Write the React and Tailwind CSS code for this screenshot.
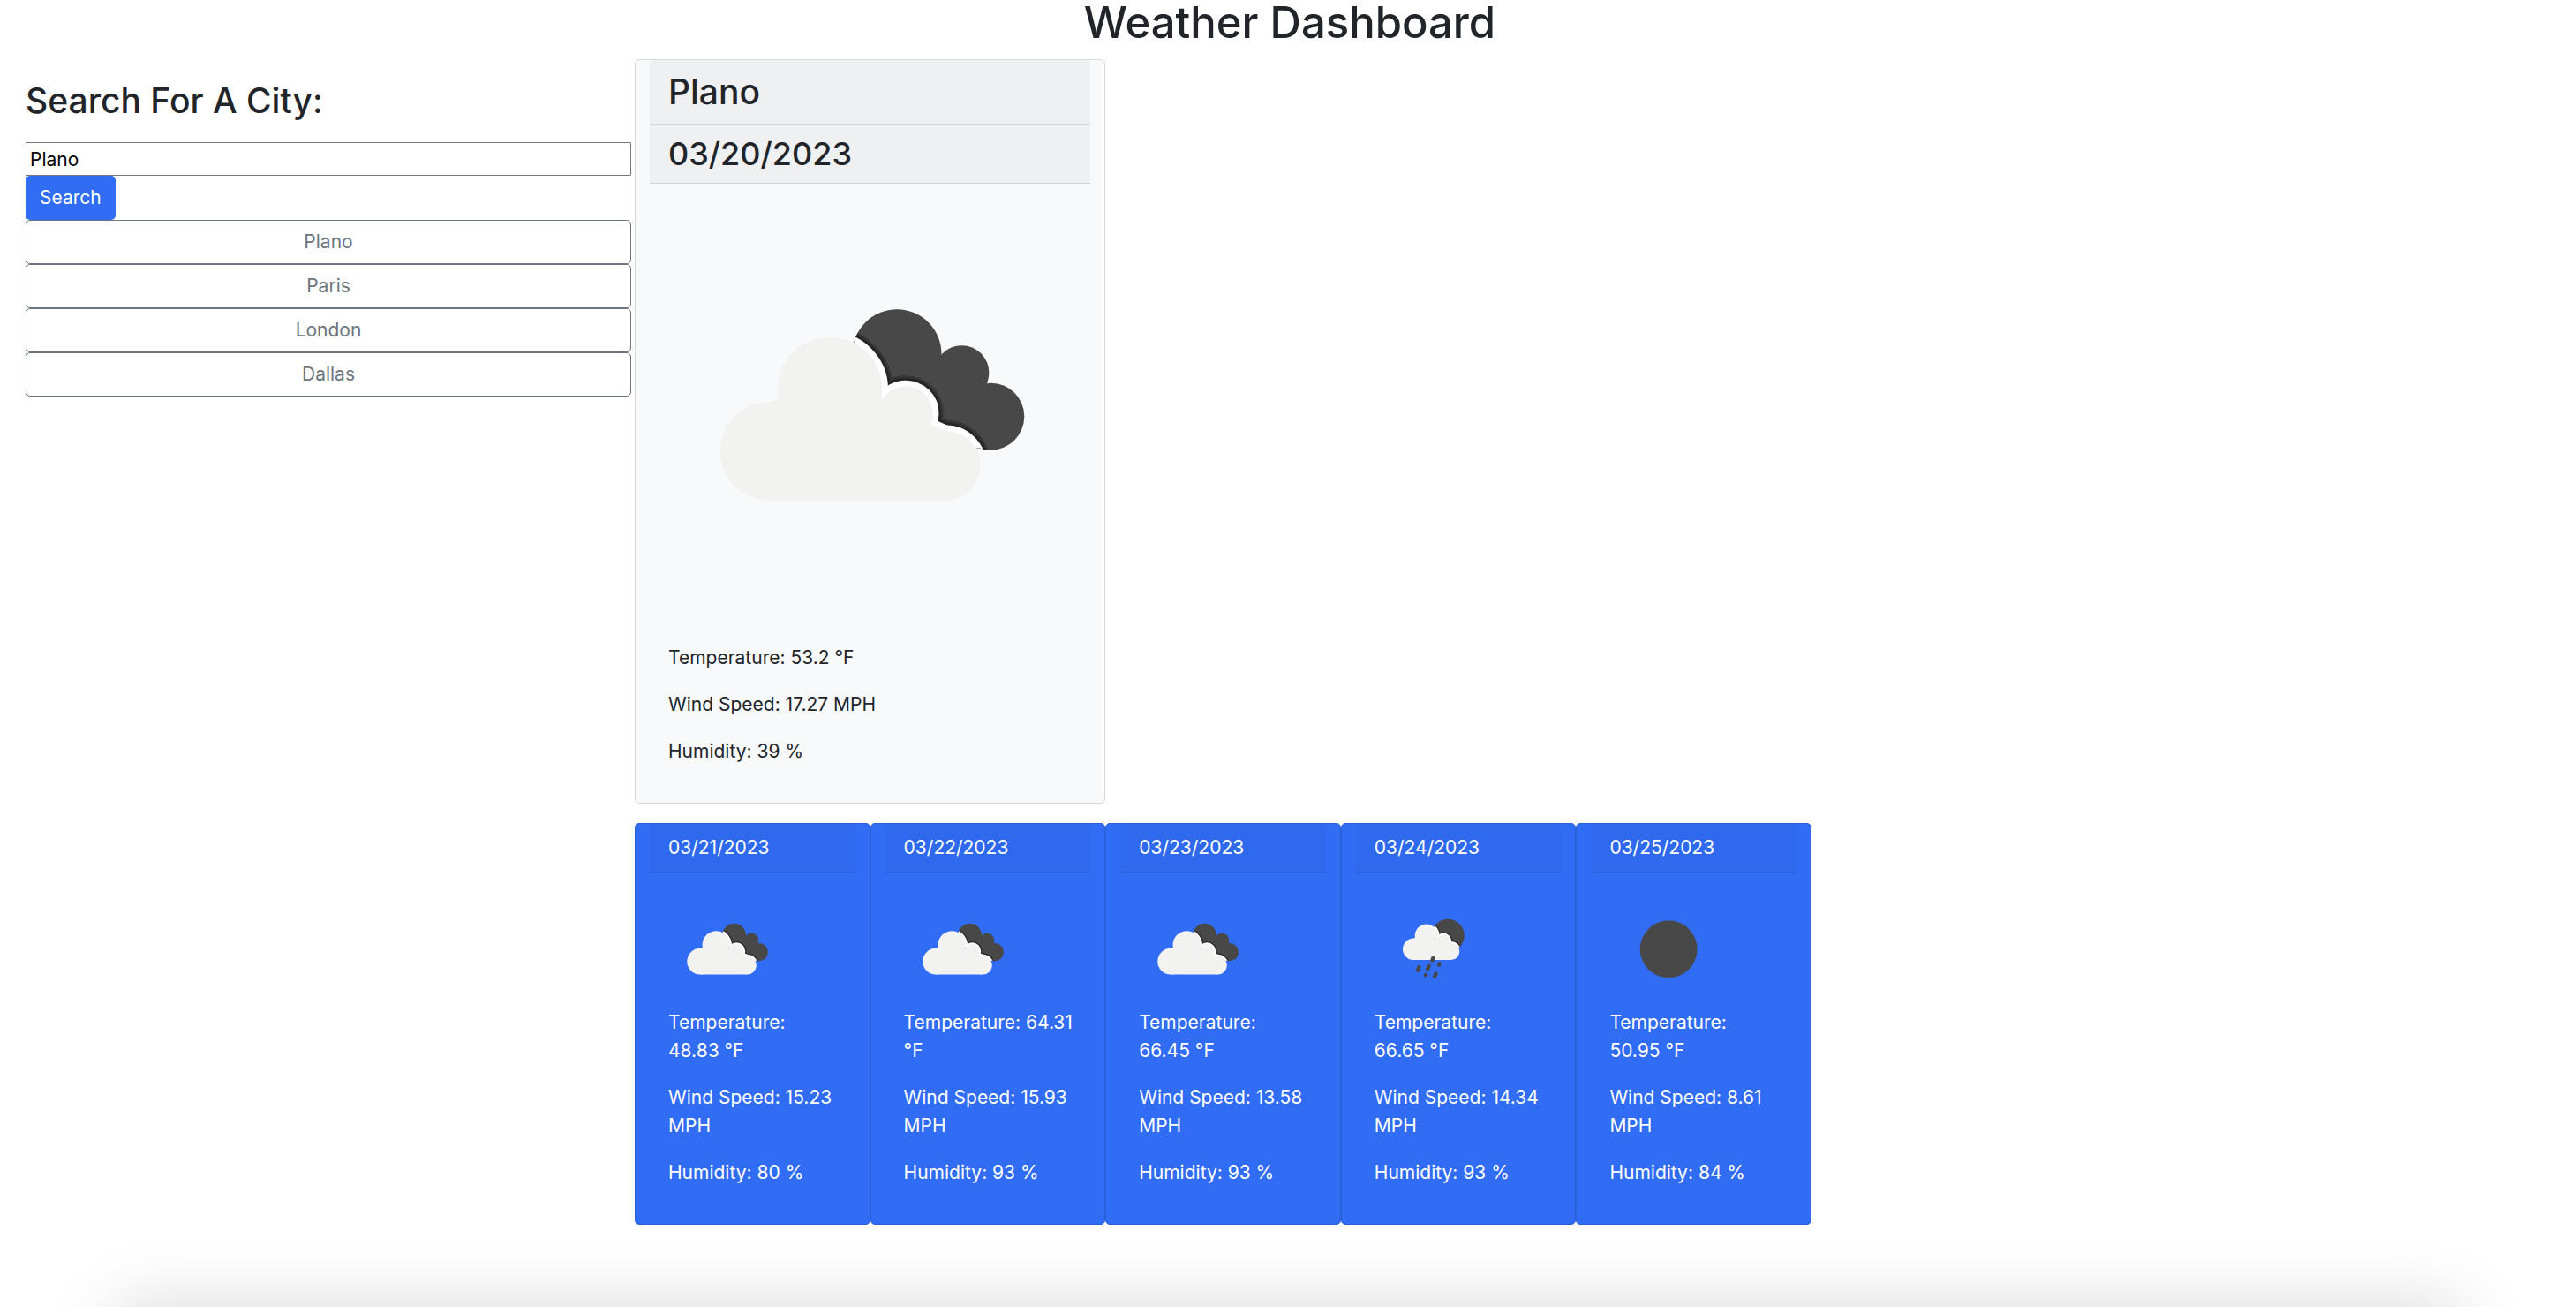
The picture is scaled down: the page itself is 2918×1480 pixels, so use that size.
import { useId, useState } from "react";

const CLOUD = {
  circles: [
    [27.2, 59.9, 11.2],
    [40.9, 45.9, 11.9],
    [58.1, 51.3, 6.2],
    [67.2, 63.2, 7.9],
  ],
  core: "27.2,71.1 27.2,48.7 40.9,45.9 58.1,51.3 67.2,55.3 67.2,71.1",
};

const RAIN_CLOUD = {
  circles: [
    [33.2, 49.5, 9.2],
    [44.2, 38, 9.8],
    [58.7, 42.6, 5.5],
    [65.2, 51.5, 7.2],
  ],
  core: "33.2,58.7 33.2,40.3 44.2,38 58.7,42.6 65.2,44.3 65.2,58.7",
};

const BACK_CLOUD = {
  circles: [
    [56.1, 37.8, 10.1],
    [70.8, 42.1, 6.2],
    [77.4, 52, 7.6],
  ],
  core: "50,44 56.1,37.8 66,38.5 70.8,42.1 76.5,44.5 77.4,52 74.9,59.2 60,60",
};

const MOON = { circles: [[62.5, 37.9, 14]], core: "62.5,37.9" };

const DROPS = [
  [49.8, 57, 49.2, 59],
  [37.9, 64.8, 36.7, 67.6],
  [46.4, 63.8, 45.2, 66.6],
  [55.4, 61.9, 55, 62.9],
  [43.6, 71.4, 43.4, 71.6],
  [52.4, 70.3, 51.2, 72.9],
];

function Shape({ shape }) {
  return (
    <>
      {shape.circles.map(([cx, cy, r]) => (
        <circle key={cx} cx={cx} cy={cy} r={r} />
      ))}
      <polygon points={shape.core} />
    </>
  );
}

function Layered({ back, front }) {
  const id = useId();
  return (
    <>
      <clipPath id={id}>
        {back.circles.map(([cx, cy, r]) => (
          <circle key={cx} cx={cx} cy={cy} r={r} />
        ))}
        <polygon points={back.core} />
      </clipPath>
      <g fill="#484849">
        <Shape shape={back} />
      </g>
      <g clipPath={`url(#${id})`}>
        <g fill="#363638" stroke="#363638" strokeWidth="4.8">
          <Shape shape={front} />
        </g>
        <g fill="#262628" stroke="#262628" strokeWidth="3.8">
          <Shape shape={front} />
        </g>
        <g fill="#fff" stroke="#fff" strokeWidth="2.6">
          <Shape shape={front} />
        </g>
      </g>
      <g fill="#f2f2f1">
        <Shape shape={front} />
      </g>
    </>
  );
}

function WeatherIcon({ kind, className }) {
  return (
    <svg viewBox="0 0 100 100" className={className} role="img" aria-label={kind}>
      {kind === "broken clouds" && <Layered back={BACK_CLOUD} front={CLOUD} />}
      {kind === "rain" && (
        <>
          <Layered back={MOON} front={RAIN_CLOUD} />
          <g stroke="#484849" strokeWidth="3.2" strokeLinecap="round">
            {DROPS.map(([x1, y1, x2, y2]) => (
              <line key={x1} x1={x1} y1={y1} x2={x2} y2={y2} />
            ))}
          </g>
        </>
      )}
      {kind === "clear sky" && <circle cx="50.5" cy="49.5" r="24.4" fill="#484849" />}
    </svg>
  );
}

const cities = ["Plano", "Paris", "London", "Dallas"];

const forecast = [
  { date: "03/21/2023", kind: "broken clouds", temp: "48.83", wind: "15.23", humidity: 80 },
  { date: "03/22/2023", kind: "broken clouds", temp: "64.31", wind: "15.93", humidity: 93 },
  { date: "03/23/2023", kind: "broken clouds", temp: "66.45", wind: "13.58", humidity: 93 },
  { date: "03/24/2023", kind: "rain", temp: "66.65", wind: "14.34", humidity: 93 },
  { date: "03/25/2023", kind: "clear sky", temp: "50.95", wind: "8.61", humidity: 84 },
];

function Readings({ temp, wind, humidity }) {
  return (
    <div className="flex flex-col gap-[21px]">
      <p>Temperature: {temp} °F</p>
      <p>Wind Speed: {wind} MPH</p>
      <p>Humidity: {humidity} %</p>
    </div>
  );
}

function DayCard({ day }) {
  return (
    <article className="rounded-[5px] border border-[#2b5fd7] bg-[#316cf4] px-4 pb-[42px] text-white">
      <h4 className="rounded-t-[5px] border-b border-[#2b5fd7] bg-[#2f69ed] px-[21px] py-[11px]">{day.date}</h4>
      <div className="pt-[21px] pr-[18px] pl-[21px]">
        <WeatherIcon kind={day.kind} className="size-[133px]" />
        <Readings {...day} />
      </div>
    </article>
  );
}

export default function App() {
  const [city, setCity] = useState("Plano");
  return (
    <div className="min-h-screen bg-white font-['Inter',sans-serif] text-[21px] leading-[32px] text-[#212529]">
      <h1 className="mb-[15px] pl-1 text-center text-[49px] leading-[52px] font-medium">Weather Dashboard</h1>
      <div className="grid grid-cols-[719fr_2199fr]">
        <aside className="pt-[21px] pr-1 pl-[29px]">
          <form onSubmit={(e) => e.preventDefault()}>
            <h2 className="mb-[21px] text-[39px] leading-[52px] font-medium">
              <label htmlFor="city">Search For A City:</label>
            </h2>
            <input
              id="city"
              type="text"
              value={city}
              onChange={(e) => setCity(e.target.value)}
              className="block h-[38px] w-full rounded-[1px] border border-[#767676] bg-white px-1 text-black"
            />
            <button type="submit" className="block h-[50px] rounded-[5px] bg-[#316cf4] px-4 text-white">
              Search
            </button>
          </form>
          {cities.map((name) => (
            <button
              key={name}
              type="button"
              onClick={() => setCity(name)}
              className="block h-[50px] w-full rounded-[5px] border border-[#6c757d] text-[#6c757d]"
            >
              {name}
            </button>
          ))}
        </aside>
        <main className="max-w-[1333px]">
          <article className="mb-[22px] w-2/5 rounded-[5px] border border-[#d6d8da] bg-[#f8f9fb] px-4 pb-[42px]">
            <h2 className="rounded-t-[5px] border-b border-[#d0d2d4] bg-[#eff0f2] px-[21px] py-[11px] text-[39px] leading-[50px] font-medium">
              Plano
            </h2>
            <h3 className="border-b border-[#d0d2d4] bg-[#eff0f2] px-[21px] py-[11px] text-[36px] leading-[44px] font-medium">
              03/20/2023
            </h3>
            <WeatherIcon kind="broken clouds" className="mt-1 mb-[18px] aspect-square w-full" />
            <div className="px-[21px]">
              <Readings temp="53.2" wind="17.27" humidity={39} />
            </div>
          </article>
          <section className="grid grid-cols-5">
            {forecast.map((day) => (
              <DayCard key={day.date} day={day} />
            ))}
          </section>
        </main>
      </div>
      <div className="pointer-events-none fixed inset-x-[130px] top-full h-24 shadow-[0_0_80px_rgba(0,0,0,0.16)]" />
    </div>
  );
}
